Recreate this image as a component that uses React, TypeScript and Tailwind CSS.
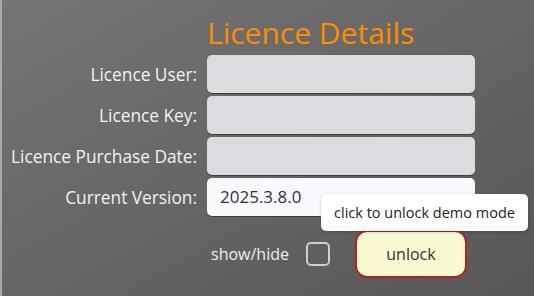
import React from 'react'

const fields = [
  { label: 'Licence User:', value: '' },
  { label: 'Licence Key:', value: '' },
  { label: 'Licence Purchase Date:', value: '' },
]

export default function App() {
  return (
    <div
      className="relative h-[296px] w-[534px] overflow-hidden border-l-2 border-[#a9a9a9] bg-gradient-to-br from-[#757575] to-[#575757]"
      style={{ fontFamily: '"Open Sans", "Noto Sans", sans-serif' }}
    >
      {/* window edge notch */}
      <div className="absolute left-[-2px] top-[71px] h-[17px] w-[2px] bg-[#555]" />

      <div className="grid grid-cols-[195px_268px] gap-x-[10px] gap-y-[3px] pt-[14px]">
        <div />
        <h1 className="mb-[1px] h-[37px] text-[30px] leading-[37px] text-[#ff8c00]">Licence Details</h1>

        {fields.map((f) => (
          <React.Fragment key={f.label}>
            <div className="flex h-[38px] items-center justify-end pt-[2px] text-[17.3px] text-[#f2f2f2]">{f.label}</div>
            <div className="h-[38px] rounded-[5px] bg-[#dcdbe0] shadow-[0_1px_0_#3e3e3e]" />
          </React.Fragment>
        ))}

        <div className="flex h-[38px] items-center justify-end pt-[2px] text-[17.3px] text-[#f2f2f2]">Current Version:</div>
        <div className="flex h-[38px] items-center rounded-[5px] bg-[#f8f8fd] pl-[13px] text-[17px] text-[#333] shadow-[0_1px_0_#3e3e3e]">
          2025.3.8.0
        </div>

        <div />
        <div className="mt-[11px] flex h-[48px] items-center">
          <span className="ml-[4px] text-[16px] text-[#eeeeee]">show/hide</span>
          <span className="ml-[17px] h-[24px] w-[24px] rounded-[5px] border-2 border-[#cfcfcf]" />
          <button className="ml-[25px] h-[48px] w-[112px] rounded-[12px] border-2 border-[#b22222] bg-[#fafad2] text-[16px] text-[#333]">
            unlock
          </button>
        </div>
      </div>

      {/* tooltip */}
      <div className="absolute left-[319px] top-[194px] flex h-[37px] w-[207px] items-center justify-center rounded-[5px] bg-white text-[14.5px] text-[#222] shadow-[0_1px_3px_rgba(0,0,0,0.25)]">
        click to unlock demo mode
      </div>
    </div>
  )
}
